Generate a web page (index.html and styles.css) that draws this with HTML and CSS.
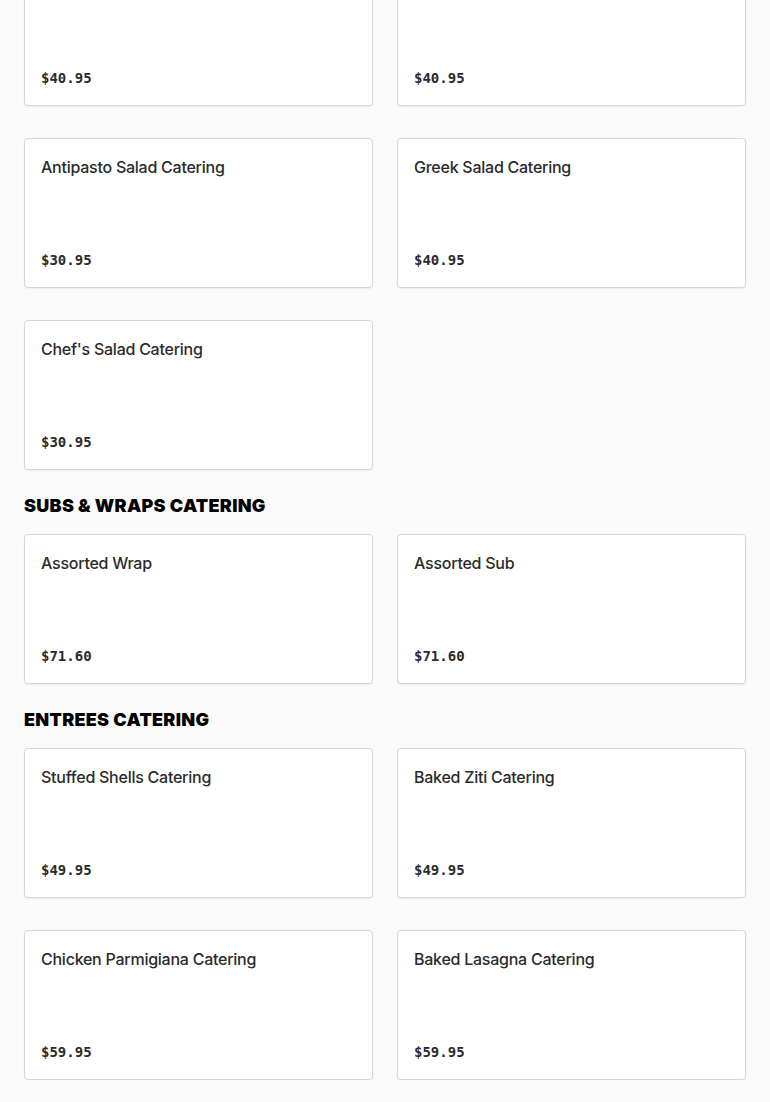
FILE: index.html
```html
<!DOCTYPE html>
<html lang="en">
<head>
    <meta charset="UTF-8">
    <title>Catering Menu</title>
    <link rel="stylesheet" href="styles.css">
</head>
<body>
    <div class="menu">
        <section class="menu-section first">
            <div class="item-grid">
                <div class="item-card">
                    <div class="item-name">Caesar Salad Catering</div>
                    <div class="item-price">$40.95</div>
                </div>
                <div class="item-card">
                    <div class="item-name">Garden Salad Catering</div>
                    <div class="item-price">$40.95</div>
                </div>
                <div class="item-card">
                    <div class="item-name">Antipasto Salad Catering</div>
                    <div class="item-price">$30.95</div>
                </div>
                <div class="item-card">
                    <div class="item-name">Greek Salad Catering</div>
                    <div class="item-price">$40.95</div>
                </div>
                <div class="item-card">
                    <div class="item-name">Chef's Salad Catering</div>
                    <div class="item-price">$30.95</div>
                </div>
            </div>
        </section>

        <section class="menu-section">
            <h2 class="section-title">Subs &amp; Wraps Catering</h2>
            <div class="item-grid">
                <div class="item-card">
                    <div class="item-name">Assorted Wrap</div>
                    <div class="item-price">$71.60</div>
                </div>
                <div class="item-card">
                    <div class="item-name">Assorted Sub</div>
                    <div class="item-price">$71.60</div>
                </div>
            </div>
        </section>

        <section class="menu-section">
            <h2 class="section-title">Entrees Catering</h2>
            <div class="item-grid">
                <div class="item-card">
                    <div class="item-name">Stuffed Shells Catering</div>
                    <div class="item-price">$49.95</div>
                </div>
                <div class="item-card">
                    <div class="item-name">Baked Ziti Catering</div>
                    <div class="item-price">$49.95</div>
                </div>
                <div class="item-card">
                    <div class="item-name">Chicken Parmigiana Catering</div>
                    <div class="item-price">$59.95</div>
                </div>
                <div class="item-card">
                    <div class="item-name">Baked Lasagna Catering</div>
                    <div class="item-price">$59.95</div>
                </div>
            </div>
        </section>
    </div>
</body>
</html>
```

FILE: styles.css
```css
* {
    margin: 0;
    padding: 0;
    box-sizing: border-box;
}
body {
    background-color: #fafafa;
    font-family: Inter, "Noto Sans", Arial, sans-serif;
    overflow: hidden;
}
.menu {
    padding: 0 24px;
}
.menu-section {
    margin-top: 24px;
}
.menu-section.first {
    margin-top: -44px;
}
.section-title {
    font-family: Inter, Arial, sans-serif;
    font-size: 18px;
    line-height: 24px;
    font-weight: 900;
    text-transform: uppercase;
    letter-spacing: 0.3px;
    color: #000;
    margin-bottom: 16px;
}
.item-grid {
    display: grid;
    grid-template-columns: 1fr 1fr;
    column-gap: 24px;
    row-gap: 32px;
}
.item-card {
    height: 150px;
    display: flex;
    flex-direction: column;
    justify-content: space-between;
    padding: 16px 16px 17px;
    background-color: #fff;
    border: 1px solid #d6d6d6;
    border-radius: 4px;
    box-shadow: 0 1px 2px rgba(0,0,0,0.06);
}
.item-name {
    font-size: 16px;
    line-height: 24px;
    font-weight: 500;
    letter-spacing: -0.25px;
    color: #2b2b2b;
}
.item-price {
    font-family: "DejaVu Sans Mono", "Liberation Mono", monospace;
    font-size: 14px;
    line-height: 20px;
    font-weight: 700;
    color: #2b2b2b;
}
```
